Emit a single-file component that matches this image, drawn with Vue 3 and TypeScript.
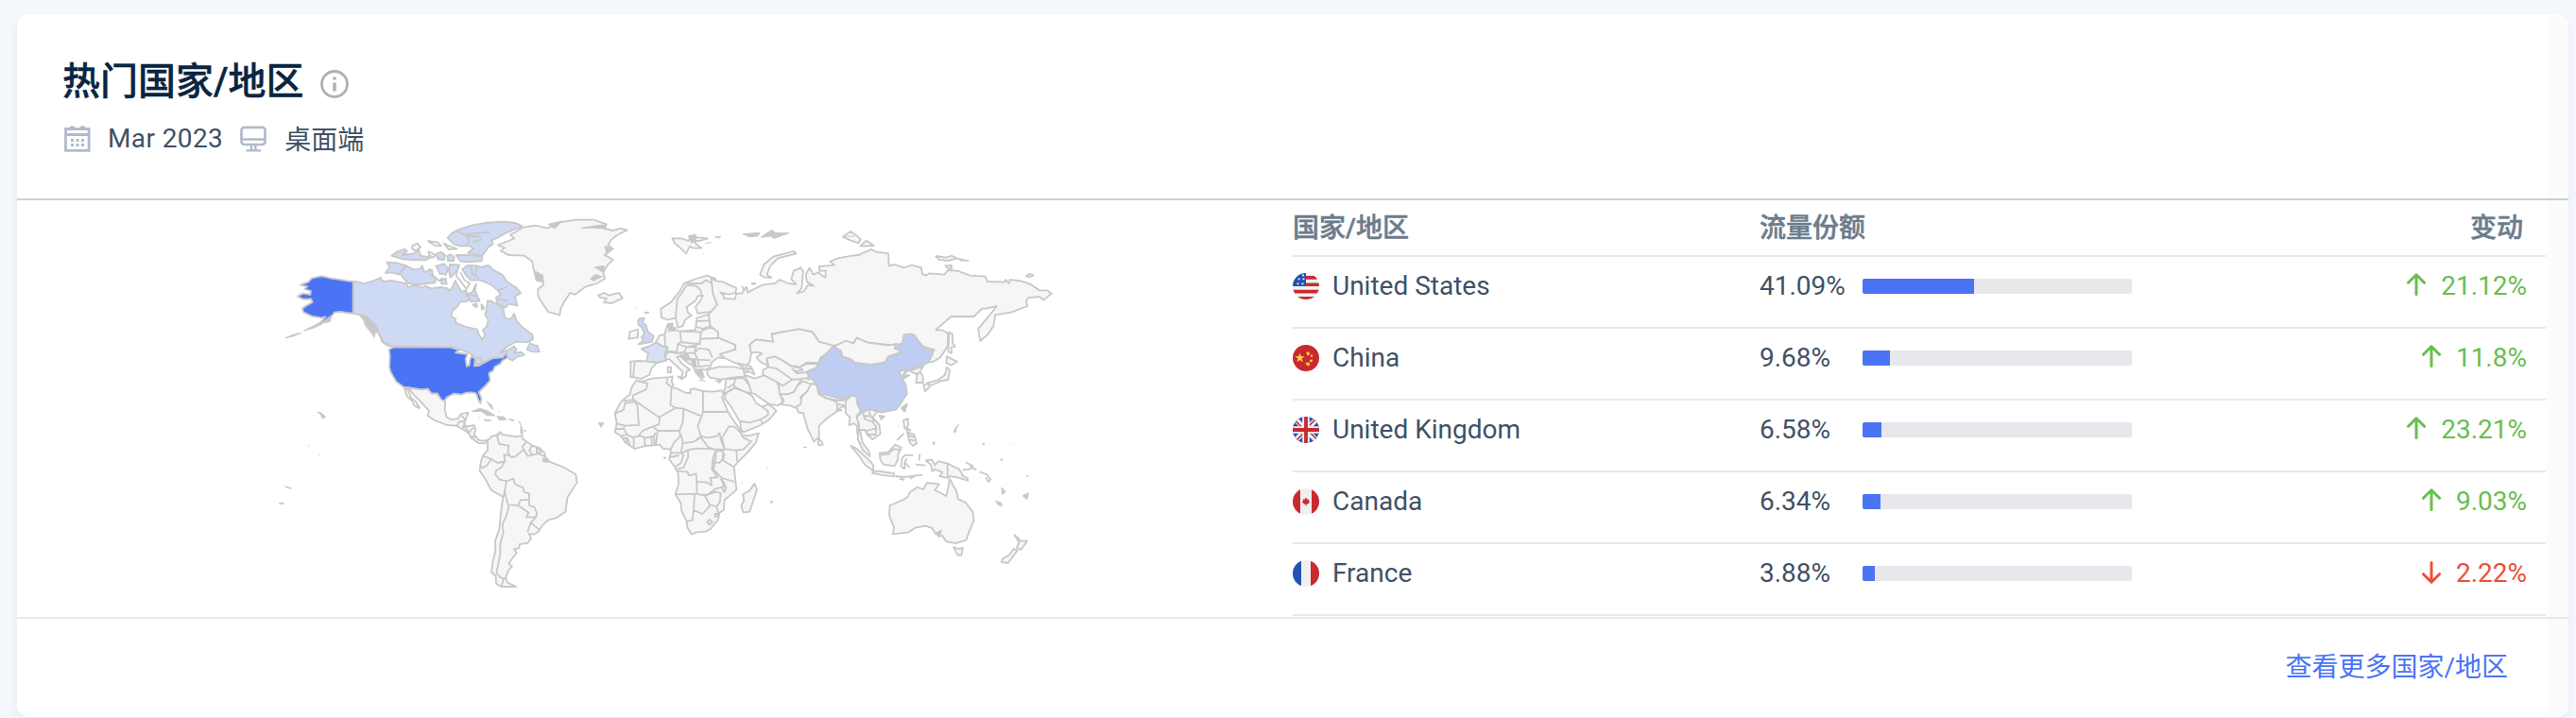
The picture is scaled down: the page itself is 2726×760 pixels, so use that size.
<script setup lang="ts">
interface Row {
  code: string
  name: string
  share: number
  change: number
}

interface Shape {
  d: string
  kind?: string
}

interface Region {
  x: number
  y: number
  shapes: Shape[]
}

const rows: Row[] = [
  { code: 'us', name: 'United States', share: 41.09, change: 21.12 },
  { code: 'cn', name: 'China', share: 9.68, change: 11.8 },
  { code: 'gb', name: 'United Kingdom', share: 6.58, change: 23.21 },
  { code: 'ca', name: 'Canada', share: 6.34, change: 9.03 },
  { code: 'fr', name: 'France', share: 3.88, change: -2.22 },
]

// Each region has its own origin; its shapes are drawn at three units per pixel.
const regions: Region[] = [
  {
    x: 280,
    y: 220,
    shapes: [
      { kind: 'ca', d: 'M283,234 L300,236 L315,240 L345,232 L368,222 L372,230 L385,234 L400,230 L425,235 L450,240 L455,252 L475,246 L500,254 L510,248 L530,256 L560,252 L580,255 L588,264 L600,245 L605,230 L615,250 L625,266 L640,262 L640,275 L660,268 L672,240 L668,262 L680,290 L650,292 L640,298 L622,298 L608,318 L597,325 L592,345 L606,352 L607,365 L635,377 L675,386 L680,402 L690,418 L700,405 L693,388 L705,378 L710,355 L700,340 L705,320 L708,295 L720,296 L745,312 L758,320 L762,348 L775,354 L785,350 L792,335 L800,360 L820,380 L850,402 L852,418 L835,427 L800,425 L780,435 L765,445 L745,462 L775,450 L792,440 L800,450 L790,462 L815,458 L825,468 L800,474 L787,485 L770,475 L768,460 L755,475 L725,477 L700,488 L680,498 L668,495 L668,475 L650,460 L635,455 L600,443 L405,440 L380,428 L365,405 L355,380 L340,365 L315,342 L283,335Z' },
      { kind: 'ca', d: 'M581,95 L595,80 L620,68 L660,55 L700,48 L760,44 L795,48 L818,58 L795,68 L765,80 L740,95 L720,103 L725,115 L710,125 L700,140 L690,152 L665,148 L645,143 L662,130 L650,120 L620,122 L600,115Z' },
      { kind: 'line', d: 'M605,72 L635,86 L680,80 L715,78 M640,90 L690,92 M645,90 L650,105 L635,122 M690,100 L660,108' },
      { kind: 'ca', d: 'M608,150 L640,150 L690,155 L690,168 L650,172 L622,170Z M545,146 L560,140 L573,150 L570,166 L550,163Z M580,153 L590,148 L602,157 L600,168 L582,168Z' },
      { kind: 'ca', d: 'M402,152 L420,140 L445,131 L452,138 L438,150 L470,146 L490,135 L495,152 L528,158 L510,166 L475,165 L440,163Z M640,275 L672,280 L684,296 L655,298Z' },
      { kind: 'land', d: 'M470,120 L485,113 L495,125 L480,137 L468,130Z M518,105 L550,110 L562,122 L540,120Z M568,112 L588,122 L612,130 L585,132Z M520,138 L542,150 L535,158 L522,150Z M660,308 L672,304 L675,316Z M688,305 L697,318 L690,324Z' },
      { kind: 'ca', d: 'M388,173 L415,174 L452,184 L440,195 L425,212 L405,205 L383,207 L397,190Z' },
      { kind: 'ca', d: 'M450,185 L475,196 L495,193 L500,183 L508,205 L525,195 L527,212 L545,225 L540,238 L515,240 L490,245 L455,240 L438,220 L430,207Z' },
      { kind: 'ca', d: 'M545,185 L570,178 L582,192 L576,212 L556,208Z M588,180 L618,182 L612,198 L590,222 L585,200Z M560,230 L575,224 L578,242 L562,242Z' },
      { kind: 'line', d: 'M530,195 L535,215 L555,232 L565,222 M612,198 L608,215 L628,240 L640,258 L652,240 L635,230 L622,205' },
      { kind: 'ca', d: 'M628,195 L645,182 L672,184 L690,188 L710,182 L730,200 L755,212 L770,235 L800,255 L813,270 L795,282 L802,310 L775,305 L765,316 L738,305 L735,285 L750,275 L740,262 L720,245 L700,235 L685,230 L655,230 L640,215Z' },
      { kind: 'line', d: 'M655,182 L660,215 M675,184 L668,212 L680,225 M740,262 L770,250 M740,290 L775,295' },
      { kind: 'ca', d: 'M833,450 L842,430 L856,436 L866,438 L872,457 L850,457Z' },
      { kind: 'solid', d: 'M300,340 L325,343 L340,358 L356,376 L358,396 L350,398 L349,412 L338,396 L320,374 L314,356Z M365,400 L370,425 L392,440 L405,440 L380,426Z M66,413 L90,403 L117,397 L90,408Z M124,391 L150,377 L190,362 L160,380Z M190,350 L212,346 L208,362 L190,364Z' },
      { kind: 'us', d: 'M281,234 L262,232 L240,228 L210,224 L190,219 L180,217 L165,220 L150,224 L138,236 L113,245 L135,250 L128,258 L147,264 L145,276 L122,272 L104,281 L122,290 L148,289 L152,300 L130,312 L120,320 L124,332 L150,344 L180,349 L195,345 L180,362 L160,375 L178,370 L195,356 L214,342 L222,332 L240,330 L260,333 L281,335Z' },
      { kind: 'us', d: 'M408,443 L395,450 L398,470 L396,505 L400,520 L418,552 L443,570 L470,573 L497,577 L518,575 L530,590 L548,590 L560,608 L570,614 L578,602 L600,590 L625,593 L640,587 L660,586 L672,590 L680,612 L686,622 L688,605 L680,585 L700,566 L716,548 L712,525 L725,518 L730,505 L748,495 L755,485 L770,476 L768,458 L757,475 L725,477 L700,490 L680,501 L666,502 L668,480 L658,470 L652,482 L650,500 L642,503 L638,480 L644,465 L625,462 L605,460 L618,452 L590,443Z' },
      { kind: 'land', d: 'M443,570 L470,573 L497,577 L518,575 L530,590 L548,590 L560,608 L574,616 L572,640 L578,665 L595,673 L615,669 L622,655 L647,650 L640,668 L635,678 L620,680 L610,692 L580,690 L540,675 L518,660 L522,645 L500,620 L475,595 L462,578Z' },
      { kind: 'land', d: 'M443,571 L458,583 L465,603 L480,615 L493,637 L475,628 L468,612 L453,600Z' },
      { kind: 'ca', d: 'M670,478 L685,476 L690,490 L678,497 L668,494Z' },
    ],
  },
  {
    x: 280,
    y: 420,
    shapes: [
      { kind: 'land', d: 'M610,93 L618,80 L634,78 L636,95 L665,90 L670,105 L665,120 L680,137 L690,140 L708,138 L700,148 L680,147 L655,130 L650,118 L632,104Z' },
      { kind: 'line', d: 'M624,60 L638,72 L630,100 M636,96 L648,112 L664,98 M655,126 L672,128' },
      { kind: 'solid', d: 'M658,46 L685,37 L710,46 L732,60 L705,59 L690,47Z M738,62 L760,64 L768,72 L745,74Z M775,71 L792,74 L790,77Z M696,72 L720,75 L703,77Z M704,14 L722,28 L724,41Z M808,78 L818,100 L820,116 L813,116 L814,92Z M825,105 L830,107 L826,110Z M742,47 h5 M681,65 h3' },
      { kind: 'land', d: 'M708,140 L720,126 L736,122 L748,112 L755,120 L780,124 L800,127 L818,122 L818,132 L835,145 L850,155 L872,162 L888,178 L895,200 L910,208 L945,222 L988,246 L992,272 L962,318 L955,365 L925,385 L902,390 L882,408 L868,430 L855,437 L840,435 L846,450 L835,465 L810,468 L808,480 L792,484 L800,495 L785,515 L775,530 L786,538 L775,550 L766,572 L770,590 L800,603 L752,603 L735,593 L734,570 L720,556 L725,520 L733,490 L732,458 L745,420 L750,370 L757,318 L720,297 L700,260 L683,235 L685,215 L692,188 L708,170Z' },
      { kind: 'line', d: 'M748,112 L738,125 L745,150 L775,155 L772,175 L782,192 M780,186 L760,184 L764,205 L740,210 L720,198 L693,188 M720,198 L706,218 L692,226 L685,218 M762,207 L752,224 L735,235 L732,245 L745,262 L768,268 L790,260 L795,278 L820,288 L824,302 L840,308 L840,327 L812,328 L805,345 L778,343 M768,268 L762,300 L758,318 M762,300 L768,325 L775,350 L768,378 L755,405 L758,430 L748,470 L748,500 L742,530 L736,560 L750,575 L768,578 M805,345 L838,368 L832,382 L862,382 L864,368 L856,350 L840,345 L840,327 M862,382 L845,400 L835,430 M845,400 L875,424 M830,145 L818,158 L822,168 L795,190 L782,192 M822,165 L835,188 L870,180 L890,190 M850,155 L840,170 L850,184 M864,162 L865,180 M760,575 L752,600' },
      { kind: 'fr', d: 'M864,164 L874,164 L879,172 L872,181 L864,178Z' },
      { kind: 'solid', d: 'M168,48 L180,51 L194,64 L182,69 L180,58Z M141,154 v4 M172,184 h4 M64,284 L87,291 L76,290Z M45,338 L58,336 L59,341Z M882,196 L900,196 L898,208 L884,206Z' },
    ],
  },
  {
    x: 620,
    y: 380,
    shapes: [
      { kind: 'land', d: 'M160,68 L175,72 L210,62 L260,58 L275,56 L272,72 L278,82 L272,90 L290,94 L305,102 L320,108 L332,108 L332,96 L345,94 L372,102 L400,104 L432,100 L438,112 L432,122 L450,165 L465,190 L490,225 L495,242 L515,244 L548,236 L540,265 L515,295 L485,325 L470,342 L475,385 L478,415 L440,448 L438,480 L424,488 L420,510 L395,540 L380,548 L352,550 L335,556 L322,535 L320,515 L305,485 L300,455 L284,430 L295,395 L292,360 L280,340 L264,318 L270,298 L268,287 L245,285 L235,272 L190,276 L155,285 L125,265 L112,245 L92,232 L98,205 L92,172 L112,135 L140,112 L145,90Z' },
      { kind: 'line', d: 'M165,70 L196,78 L192,96 L150,115 L148,130 M260,58 L256,76 L272,90 L270,130 L268,145 L285,156 M148,130 L118,133 M150,138 L124,140 L120,162 L92,172 M148,130 L163,145 L168,210 L125,212 L98,205 M150,128 L232,185 L285,155 L310,158 L368,182 M372,100 V168 H450 M372,168 L368,182 M368,182 L355,212 L365,245 L345,262 L305,268 M310,158 L308,200 L297,228 L228,228 L212,214 L232,208 L235,185 M228,228 L222,272 M297,228 L300,245 L280,265 L268,290 M168,243 L180,228 L212,214 M168,243 L190,250 L215,245 L222,234 M186,248 L188,276 M208,248 L210,276 M216,246 L218,274 M95,222 L120,222 L122,212 M122,222 L130,240 L152,250 L152,282 M130,240 L110,245 M118,252 L132,252 L128,268 M132,252 L140,272 M152,248 L172,244 M302,240 L308,266 L302,298 L270,298 M345,262 L365,248 L388,280 L405,286 L350,284 L322,290 L302,300 M365,245 L385,250 L415,246 L425,234 L428,256 L438,280 M405,286 L440,288 M452,218 L432,250 L440,285 M450,215 L470,214 L490,232 L500,250 L525,262 L500,287 L478,290 L440,286 M478,290 L480,325 M440,300 L435,322 L468,342 M324,290 L325,310 L310,345 L290,350 M290,356 L322,358 L328,370 L350,365 L352,390 L385,392 L400,402 L395,378 L418,375 L400,350 L405,310 L412,292 M302,298 L310,305 L302,330 L285,342 M268,312 L296,306 M412,326 L404,350 L432,378 L472,390 M352,390 L352,428 L284,430 M350,428 L372,432 L388,430 L412,412 L440,405 L428,380 M378,435 L410,422 L428,425 L425,455 L415,468 L392,462Z M345,432 L342,480 L370,492 L395,465 M342,480 L338,512 L320,515 M415,468 L422,495' },
      { kind: 'line', d: 'M385,518 L393,510 L402,518 L392,526Z M412,320 L412,292 L436,292 L434,318 L424,330 L410,326 M398,322 L412,322 M398,335 L410,330 M432,382 L445,408 L440,424 L430,405 M410,492 h10 v8 h-10Z' },
      { kind: 'land', d: 'M535,395 L543,415 L520,485 L500,487 L493,465 L502,450 L498,430 L520,418Z' },
      { kind: 'land', d: 'M445,108 L462,98 L470,92 L500,102 L520,112 L530,120 L540,140 L560,152 L578,145 L590,150 L605,165 L582,192 L555,210 L500,232 L492,222 L490,200 L460,150 L440,125Z' },
      { kind: 'line', d: 'M490,198 L520,202 L555,192 L560,205 M555,192 L578,178 L578,165 L560,152' },
      { kind: 'land', d: 'M445,65 L475,62 L500,60 L520,85 L526,110 L500,102 L475,90 L448,105 L438,112 L442,88Z' },
      { kind: 'line', d: 'M475,62 L470,80 L448,92 M470,80 L472,92' },
      { kind: 'land', d: 'M503,50 L535,62 L565,52 L605,65 L615,100 L625,135 L610,148 L580,142 L560,128 L535,110 L526,110 L520,85Z' },
      { kind: 'land', d: 'M612,70 L650,60 L690,55 L672,85 L660,105 L640,112 L615,112Z' },
      { kind: 'land', d: 'M615,112 L640,112 L660,105 L672,85 L690,70 L715,80 L705,100 L682,120 L684,142 L665,155 L650,148 L622,145 L628,130Z' },
      { kind: 'solid', d: 'M40,203 L56,203 L48,217Z M248,312 h5 v4 h-5Z M573,345 l5,4 M493,391 l4,5 M586,452 h6 v4 h-6Z M692,279 h8 v2 h-8Z' },
    ],
  },
  {
    x: 560,
    y: 220,
    shapes: [
      { kind: 'land', d: 'M-20,62 L20,56 L60,65 L100,45 L150,38 L205,38 L245,52 L240,66 L265,72 L290,66 L312,70 L280,86 L262,100 L250,118 L266,130 L240,150 L266,165 L250,180 L235,205 L240,225 L215,240 L180,250 L145,275 L130,270 L110,300 L100,320 L97,340 L60,330 L40,300 L28,280 L28,258 L45,245 L42,215 L15,200 L10,170 L-15,152 L-65,150 L-90,137 L-78,127 L-100,118 L-65,105 L-48,97 L-60,85 L-40,75Z' },
      { kind: 'solid', d: 'M60,52 L105,42 L80,66Z M165,64 L215,56 L245,54 L240,66 L205,64Z M208,188 L238,184 L236,206Z M194,226 L210,212 L232,218 L205,232Z M15,205 L38,212 L44,236 L22,232Z M240,122 L266,130 L246,144Z' },
      { kind: 'land', d: 'M220,278 L240,270 L252,278 L285,270 L296,287 L262,303 L238,300 L245,288 L225,285Z' },
      { kind: 'land', d: 'M455,97 L485,97 L505,105 L515,90 L540,95 L568,97 L540,105 L525,105 L530,115 L548,128 L520,128 L510,122 L498,145 L480,128 L462,112Z' },
      { kind: 'solid', d: 'M505,90 L528,84 L530,105 L515,112Z M590,92 L608,92 L600,96Z M560,112 L578,110 M678,83 L715,80 L733,80 L725,90 L700,92Z M735,94 L770,70 L782,80 L825,80 L778,97 L765,90Z M552,145 h4 M336,316 l5,5 M365,333 L380,330 L378,336Z M675,248 L690,262 L682,270Z M706,238 h12 v5 h-12Z' },
      { kind: 'land', d: 'M733,212 L745,180 L775,155 L840,138 L848,145 L790,160 L765,185 L755,212 L770,222 L745,220Z' },
      { kind: 'land', d: 'M418,320 L450,300 L480,262 L492,240 L530,225 L565,215 L592,225 L590,235 L580,240 L583,270 L597,308 L580,330 L535,335 L528,315 L545,292 L552,278 L535,280 L528,295 L500,315 L504,332 L515,342 L495,355 L488,375 L472,380 L465,350 L440,356 L420,348Z' },
      { kind: 'line', d: 'M500,245 L488,265 L470,290 L465,350 M500,245 L530,248 L545,262 L548,280 M495,238 L520,240 L548,240 L560,230 L580,240' },
      { kind: 'land', d: 'M438,442 L425,440 L402,426 L414,405 L430,402 L435,385 L440,370 L455,368 L452,382 L475,392 L505,390 L528,388 L532,350 L570,338 L575,375 L600,395 L600,412 L655,435 L652,450 L605,465 L620,478 L600,475 L580,490 L576,505 L560,515 L542,512 L552,530 L550,545 L530,525 L518,500 L500,490 L480,472 L468,472 L485,495 L512,515 L500,518 L498,535 L482,545 L488,520 L460,495 L445,480 L405,492 L432,485Z' },
      { kind: 'line', d: 'M430,405 L432,438 M440,392 L460,388 M440,440 L438,455 L468,458 L472,432 L482,426 L480,395 M480,392 L545,395 L542,432 L512,430 L482,426 M470,432 L500,442 L530,436 L540,430 M432,465 L445,458 L468,462 L492,458 L500,442 M500,442 L530,442 L525,460 L500,462 L492,458 M525,460 L540,446 L570,450 L582,475 M525,460 L535,482 L575,484 M545,395 L560,380 L595,385 M545,416 L600,414 M532,360 L572,358 M530,378 L560,386 L575,375 M478,468 L498,465 L512,480 L525,500 M535,482 L540,505 L572,500 M512,480 L530,480 M525,500 L540,505' },
      { kind: 'solid', d: 'M440,368 L455,366 L456,380 L466,380 L460,392 L442,386Z M480,468 L505,466 L510,484 L496,484Z M512,478 L528,482 L530,508 L520,500Z M528,512 L548,515 L556,538 L540,532Z M538,548 L560,550 M592,550 L612,545 L606,556Z M470,535 L486,535 L484,546Z' },
      { kind: 'land', d: 'M440,506 L450,506 L450,522 L440,522Z' },
      { kind: 'fr', d: 'M402,428 L425,440 L438,444 L430,465 L434,485 L405,492 L372,488 L378,462 L355,448 L380,440Z' },
      { kind: 'land', d: 'M322,488 L350,486 L372,488 L405,492 L388,510 L382,530 L355,543 L335,538 L322,538Z' },
      { kind: 'line', d: 'M335,488 L330,538' },
      { kind: 'gb', d: 'M345,360 L350,352 L366,350 L360,362 L372,375 L376,392 L395,407 L390,425 L365,430 L345,434 L362,422 L356,410 L366,402 L358,380 L348,372Z' },
      { kind: 'land', d: 'M320,393 L345,386 L345,412 L316,416Z' },
      { kind: 'land', d: 'M566,515 L600,505 L650,505 L680,512 L684,535 L640,540 L610,545 L575,540 L565,528Z' },
      { kind: 'land', d: 'M655,490 L690,497 L705,505 L716,530 L700,520 L684,522 L680,508Z' },
      { kind: 'line', d: 'M680,508 L705,512 M690,505 L692,525' },
    ],
  },
  {
    x: 840,
    y: 220,
    shapes: [
      { kind: 'land', d: 'M-262,222 L-248,232 L-225,235 L-182,255 L-185,270 L-205,275 L-235,268 L-222,278 L-222,288 L-187,290 L-182,272 L-165,272 L-150,250 L-146,268 L-100,245 L-60,240 L-45,228 L-18,240 L8,244 L-8,225 L0,200 L22,190 L30,200 L25,255 L10,272 L32,265 L45,245 L65,248 L42,235 L38,212 L50,190 L62,212 L78,205 L100,222 L102,200 L82,200 L80,186 L130,182 L115,170 L140,160 L185,152 L205,150 L245,132 L262,140 L300,145 L302,184 L320,180 L350,190 L375,182 L405,190 L408,210 L420,215 L430,208 L478,212 L490,198 L520,200 L560,215 L608,218 L615,234 L670,236 L672,228 L684,240 L686,228 L720,232 L750,242 L780,262 L805,262 L818,272 L793,293 L780,282 L745,285 L738,295 L742,312 L690,332 L640,340 L634,375 L618,400 L592,423 L585,385 L610,355 L645,312 L610,320 L598,320 L572,345 L545,345 L500,345 L450,388 L472,388 L490,400 L488,440 L465,475 L440,490 L425,490 L445,450 L410,440 L380,403 L350,405 L345,430 L320,437 L235,428 L200,413 L190,428 L125,438 L80,425 L60,395 L18,385 L-40,395 L-70,400 L-65,425 L-120,418 L-140,435 L-135,462 L-140,490 L-150,500 L-188,492 L-218,478 L-235,465 L-185,450 L-185,435 L-240,412 L-240,395 L-265,375 L-270,338 L-243,308 L-257,270Z' },
      { kind: 'land', d: 'M-140,435 L-120,418 L-65,425 L-70,402 L-40,395 L18,385 L60,395 L80,425 L125,438 L120,455 L85,475 L80,492 L40,492 L15,508 L-10,500 L-35,485 L-60,472 L-85,478 L-85,500 L-105,490 L-118,475 L-100,462 L-125,458 L-135,462Z' },
      { kind: 'land', d: 'M-98,515 L-80,505 L-85,478 L-60,472 L-35,485 L-10,502 L15,508 L40,495 L78,495 L70,508 L42,520 L48,540 L10,545 L-5,545 L-35,565 L-50,555 L-98,530Z' },
      { kind: 'line', d: 'M-82,505 L-55,510 L-5,545 M-5,510 L10,525 L45,522 M5,500 L30,515 L0,520 M40,545 L60,545 L68,560' },
      { kind: 'cn', d: 'M125,440 L150,455 L155,472 L180,480 L195,492 L245,498 L290,490 L295,475 L320,470 L345,457 L320,447 L345,430 L350,403 L368,400 L385,405 L395,425 L410,440 L425,452 L445,450 L438,470 L430,488 L410,500 L385,508 L362,518 L345,533 L358,512 L335,520 L342,535 L368,530 L345,545 L355,560 L360,590 L340,620 L325,640 L280,650 L245,642 L215,648 L205,625 L200,600 L170,600 L140,605 L90,590 L70,575 L72,552 L55,540 L40,520 L75,508 L85,478 L108,458Z' },
      { kind: 'land', d: 'M128,440 L165,422 L190,430 L200,413 L235,428 L300,437 L325,432 L320,447 L345,457 L300,472 L290,490 L245,498 L195,492 L180,480 L155,472 L150,455Z' },
      { kind: 'land', d: 'M368,518 L412,502 L400,520 L410,535 L410,555 L388,555 L392,530Z' },
      { kind: 'line', d: 'M385,526 L402,524' },
      { kind: 'land', d: 'M412,562 L430,558 L430,570 L416,582Z M422,556 L460,546 L480,530 L485,505 L495,515 L490,546 L466,550 L435,564Z M486,472 L518,488 L500,500 L484,492Z M493,395 L503,400 L505,430 L512,440 L500,444 L502,462 L490,456Z M342,635 L360,622 L352,648Z' },
      { kind: 'land', d: 'M155,92 L180,75 L200,88 L212,100 L205,112 L182,104Z M210,122 L230,104 L255,120Z M450,153 L485,158 L500,152 L518,160 L490,168 L462,165Z M738,216 L748,210 L762,214 L745,220Z M482,184 L500,182 L502,192 L486,190Z' },
      { kind: 'solid', d: 'M520,160 L556,168 L530,168Z M160,90 L195,90 M0,140 l6,6' },
    ],
  },
  {
    x: 860,
    y: 400,
    shapes: [
      { kind: 'land', d: 'M-35,60 L-15,40 L-5,18 L12,22 L18,48 L40,64 L80,72 L105,66 L130,56 L140,70 L122,80 L108,100 L98,90 L78,100 L75,108 L50,125 L20,152 L20,188 L4,202 L-15,165 L-30,112 L-45,110 L-52,92 L-38,84Z' },
      { kind: 'line', d: 'M18,52 L75,76 M78,70 L100,72 M74,82 L104,88 M76,76 L80,104 L94,102' },
      { kind: 'land', d: 'M18,190 L30,205 L32,212 L18,214Z' },
      { kind: 'land', d: 'M105,72 L125,55 L140,62 L140,78 L152,105 L140,120 L148,160 L150,190 L142,180 L140,152 L132,145 L116,150 L118,125 L105,112Z' },
      { kind: 'land', d: 'M140,125 L158,110 L182,98 L205,108 L190,125 L212,150 L215,178 L190,195 L175,182 L165,165 L150,165 L158,205 L178,232 L182,250 L160,230 L143,195 L148,150Z' },
      { kind: 'line', d: 'M160,110 L165,130 L190,140 L202,155 L200,180 L175,180 L170,168 L202,160 M165,120 L182,122 M182,98 L180,112 L195,140' },
      { kind: 'land', d: 'M120,215 L140,225 L180,262 L193,278 L192,295 L165,275 L148,248Z M190,295 L215,297 L258,303 L258,313 L215,308 L190,302Z M212,240 L240,235 L262,212 L282,222 L272,240 L270,260 L260,280 L225,275 L215,260Z' },
      { kind: 'line', d: 'M215,245 L242,242 L255,226 L278,228 M285,252 L295,245 L318,246 M285,252 L280,280 L292,290 L292,268 L308,285 M300,255 L292,268 M340,242 L338,262 M327,275 L358,278 M262,312 L290,315 L348,308 M275,320 L292,324 M308,320 L325,312' },
      { kind: 'land', d: 'M358,262 L378,260 L388,276 L400,265 L428,272 L465,290 L478,312 L492,318 L492,326 L460,316 L435,312 L428,318 L403,312 L412,300 L388,290 L380,298 L375,275Z' },
      { kind: 'line', d: 'M428,272 V318 M475,292 L500,290 L508,280 L486,268 M500,282 L520,292 M530,298 L555,308 L565,322 L558,330 L550,315' },
      { kind: 'land', d: 'M288,135 L302,130 L304,150 L298,158 L312,168 L292,160Z M300,172 L322,180 L330,208 L318,216 L308,204Z' },
      { kind: 'line', d: 'M268,198 L290,176 M296,160 L305,182 L322,188 M308,196 L325,200' },
      { kind: 'land', d: 'M245,405 L290,386 L302,378 L310,362 L332,347 L352,354 L363,333 L402,337 L388,356 L424,375 L430,350 L435,320 L446,342 L455,356 L462,385 L485,395 L508,425 L512,452 L498,485 L487,515 L455,525 L425,520 L410,500 L398,503 L408,485 L390,495 L380,478 L360,470 L325,476 L305,490 L255,496 L258,475 L243,435Z' },
      { kind: 'land', d: 'M447,536 L460,543 L476,540 L472,563 L461,563 L452,548Z' },
      { kind: 'land', d: 'M640,498 L652,508 L660,518 L682,517 L662,545 L648,540 L655,522Z M638,543 L650,548 L620,588 L600,585 L602,575 L625,562Z' },
      { kind: 'solid', d: 'M210,118 L230,122 L217,134Z M283,98 L300,84 L292,108Z M448,172 L453,158 L464,148 L456,160 L454,172Z M380,205 L388,204 L384,213Z M540,208 h5 v4 h-5Z M597,258 h5 v4 h-5Z M666,374 L686,365 L680,386Z M580,390 L600,398 L600,408 L588,402Z M600,348 L612,362 L602,370Z M678,310 L686,313Z M258,182 h2 M271,152 v4 M628,208 h3 M390,494 L408,484 L402,506Z' },
    ],
  },
]
</script>

<template>
  <main class="page">
    <section class="card">
      <header class="head">
        <div class="title-line">
          <h2>热门国家/地区</h2>
          <svg class="info" viewBox="0 0 30 30">
            <circle cx="15" cy="15" r="13.5" fill="none" stroke="currentColor" stroke-width="2.8" />
            <path d="M15 7.5v3M15 13.5v9" stroke="currentColor" stroke-width="3.4" />
          </svg>
        </div>
        <div class="meta">
          <svg class="meta-icon" viewBox="0 0 28 28">
            <path d="M1.500 3.500h24.600v22.800H1.500z M2 9.500h24" fill="none" stroke="currentColor" stroke-width="2.8" />
            <path d="M6 .5h5v3H6z M17 .5h5v3h-5z M7 14h3v3H7z M12.5 14h3v3h-3z M18 14h3v3h-3z M7 19h3v3H7z M12.5 19h3v3h-3z M18 19h3v3h-3z" fill="currentColor" />
          </svg>
          <span class="date">Mar 2023</span>
          <svg class="meta-icon" viewBox="0 0 28 28">
            <rect x="1.500" y="1.800" width="25" height="18.200" rx="3" fill="none" stroke="currentColor" stroke-width="2.7" />
            <path d="M2 14.5h24M12 20v6M16.400 20v6M6.500 26.400h15.500" fill="none" stroke="currentColor" stroke-width="2.4" />
          </svg>
          <span class="device">桌面端</span>
        </div>
      </header>

      <div class="body">
        <div class="map-pane">
          <svg class="map" viewBox="280 212 860 440">
            <g v-for="(r, i) in regions" :key="i" :transform="`translate(${r.x} ${r.y}) scale(0.33333)`">
              <path v-for="(s, j) in r.shapes" :key="j" :d="s.d" :class="s.kind" />
            </g>
          </svg>
        </div>

        <div class="table">
          <div class="row row-head">
            <span>国家/地区</span>
            <span>流量份额</span>
            <span class="right">变动</span>
          </div>
          <div v-for="row in rows" :key="row.code" class="row">
            <div class="country">
              <svg class="flag" viewBox="0 0 28 28">
                <g v-if="row.code === 'us'">
                  <path fill="#f0f0f0" d="M0 0h28v28H0z" />
                  <path fill="#c92a30" d="M14 3h14v3.700H14zM14 10.500h14V14H14zM0 17.800h28v3.600H0zM0 25h28v3H0z" />
                  <path fill="#2352b3" d="M0 0h14v14H0z" />
                  <path stroke="#f0f0f0" stroke-width="1.8" stroke-dasharray="2 3" d="M5.500 6.300h8M4.500 11.300h9M10 2.300h4" />
                </g>
                <g v-else-if="row.code === 'cn'">
                  <path fill="#c92a30" d="M0 0h28v28H0z" />
                  <path fill="#ffda44" d="M7.500 8.500l1.200 3.700h3.900l-3.100 2.300 1.200 3.700-3.200-2.300-3.100 2.300 1.200-3.700L2.500 12.200h3.900zM14 7.500l2 .4 1.500-1-.2 1.900 1.600 1-2 .5-.8 1.600-.9-1.600zM18.500 11l2.500-.5-.3 2.800-1.500-.7zM18 16l3-.5-.5 2.500-2 .4zM14.500 18.500l1.700.7 1.400-1v2l1.200 1-1.900.3-1 1.400-.6-1.800-1.700-.5z" />
                </g>
                <g v-else-if="row.code === 'gb'">
                  <path fill="#2352b3" d="M0 0h28v28H0z" />
                  <path stroke="#f0f0f0" stroke-width="5.500" d="M0 0l28 28M28 0L0 28" />
                  <path stroke="#c92a30" stroke-width="1.600" d="M1 2.500l9 9M26 1l-9 9M27 25.500l-9-9M2 27l9-9" />
                  <path stroke="#f0f0f0" stroke-width="7.600" d="M14 0v28M0 14h28" />
                  <path stroke="#c92a30" stroke-width="3.800" d="M14 0v28M0 14h28" />
                </g>
                <g v-else-if="row.code === 'ca'">
                  <path fill="#f0f0f0" d="M0 0h28v28H0z" />
                  <path fill="#c92a30" d="M0 0h8v28H0zM20 0h8v28h-8zM14 9.500l1.500 2.300 1.800-.6-.4 2.300 1.600.8-2.900 2.500H14.400v2h-.8v-2h-1.200l-2.900-2.500 1.600-.8-.4-2.300 1.800.6z" />
                </g>
                <g v-else>
                  <path fill="#f0f0f0" d="M0 0h28v28H0z" />
                  <path fill="#2352b3" d="M0 0h9v28H0z" />
                  <path fill="#c92a30" d="M19 0h9v28h-9z" />
                </g>
              </svg>
              <span class="label">{{ row.name }}</span>
            </div>
            <div class="share">
              <span class="share-value label">{{ row.share }}%</span>
              <span class="track"><span class="fill" :style="{ width: row.share + '%' }"></span></span>
            </div>
            <div class="change" :class="{ down: row.change < 0 }">
              <svg class="arrow" viewBox="0 0 20 24">
                <path d="M10 22.500V1.800M1.500 10.300L10 1.800l8.500 8.500" fill="none" stroke="currentColor" stroke-width="3" stroke-linecap="round" stroke-linejoin="round" />
              </svg>
              <span class="label">{{ Math.abs(row.change) }}%</span>
            </div>
          </div>
        </div>
      </div>

      <footer class="foot">
        <a>查看更多国家/地区</a>
      </footer>
    </section>
  </main>
</template>

<style>
body {
  background: #f5f9fe;
}
</style>

<style scoped>
.page {
  box-sizing: border-box;
  height: 760px;
  padding: 15px 8px 1px 18px;
  overflow: hidden;
  background: #f5f9fe;
  font-family: Roboto, 'Noto Sans CJK SC', sans-serif;
  font-size: 28px;
  color: #3f5166;
}
.card {
  display: flex;
  flex-direction: column;
  height: 744px;
  border-radius: 12px;
  background: linear-gradient(to left, #fcfcfd 23px, #fff 23px);
  box-shadow: 0 6px 12px rgba(14, 30, 62, 0.08);
  overflow: hidden;
}
.head {
  box-sizing: border-box;
  height: 197px;
  padding: 48px 48px 0;
  border-bottom: 2px solid #cbd0d5;
}
.title-line {
  display: flex;
  align-items: center;
  gap: 17px;
  height: 48px;
}
h2 {
  margin: 0;
  font-size: 40px;
  font-weight: 500;
  line-height: 48px;
  color: #092540;
  -webkit-text-stroke: 0.4px currentColor;
}
.info {
  width: 30px;
  height: 30px;
  margin-top: 3px;
  color: #b0b0b0;
}
.meta {
  display: flex;
  align-items: center;
  height: 40px;
  margin-top: 15px;
}
.meta-icon {
  width: 28px;
  height: 28px;
  margin: 2px 0 0 2px;
  color: #b0bacb;
}
.date {
  margin: 0 16px 0 18px;
  letter-spacing: 0.4px;
}
.device {
  margin-left: 19px;
}
.body {
  display: flex;
  height: 441px;
}
.map-pane {
  width: 1350px;
}
.map {
  display: block;
  width: 860px;
  height: 440px;
  margin-left: 262px;
}
.map path {
  stroke: #c8c8c8;
  stroke-width: 5.4;
  stroke-linejoin: miter;
  stroke-miterlimit: 2;
}
.map .land {
  fill: #f6f6f6;
}
.map .us {
  fill: #4b74f5;
}
.map .ca {
  fill: #cedaf4;
}
.map .cn {
  fill: #bfcdf3;
}
.map .gb {
  fill: #cbd7f5;
}
.map .fr {
  fill: #d6dff4;
}
.map .line {
  fill: none;
}
.map .solid {
  fill: #c8c8c8;
  stroke-width: 3;
}
.table {
  width: 1326px;
}
.row {
  box-sizing: border-box;
  display: grid;
  grid-template-columns: 494px 1fr 300px;
  align-items: center;
  height: 76px;
  padding-bottom: 12px;
  border-bottom: 2px solid #e6e8ec;
}
.row-head {
  height: 60px;
  padding-bottom: 4px;
  font-weight: 500;
  color: #6b7c8c;
  -webkit-text-stroke: 0.5px currentColor;
}
.right {
  padding-right: 24px;
  text-align: right;
}
.country,
.share,
.change {
  display: flex;
  align-items: center;
}
.label {
  margin-top: -2px;
}
.flag {
  width: 28px;
  height: 28px;
  margin-right: 14px;
  border-radius: 50%;
}
.share-value {
  width: 109px;
}
.track {
  width: 285px;
  height: 16px;
  border-radius: 2px;
  background: #e6e8ec;
  overflow: hidden;
}
.fill {
  display: block;
  height: 100%;
  min-width: 12px;
  padding-right: 1px;
  background: #4b74f5;
}
.change {
  justify-content: flex-end;
  gap: 16px;
  padding-right: 20px;
  color: #69be50;
}
.arrow {
  width: 20px;
  height: 24px;
  margin-top: -4px;
}
.down {
  color: #eb5038;
}
.down .arrow {
  margin-top: -2px;
  transform: rotate(180deg);
}
.foot {
  box-sizing: border-box;
  display: flex;
  align-items: center;
  justify-content: flex-end;
  height: 106px;
  padding: 0 64px 7px 0;
  border-top: 2px solid #e6e8ec;
  color: #4b74f5;
}
</style>
